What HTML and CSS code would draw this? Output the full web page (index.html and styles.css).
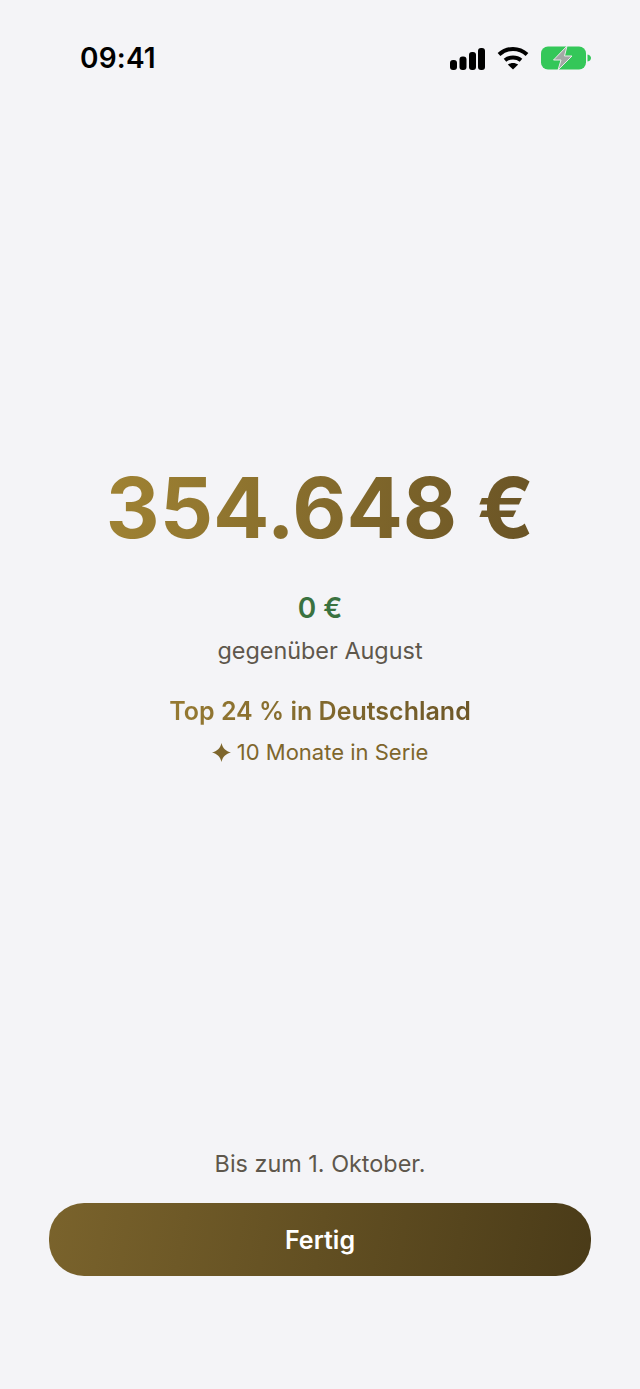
FILE: index.html
```
<!DOCTYPE html>
<html lang="de">
<head>
<meta charset="UTF-8">
<title>Kontostand</title>
<link rel="stylesheet" href="styles.css">
</head>
<body>

<!-- status bar -->
<header class="statusbar">
  <span class="clock">09:41</span>
  <div class="status-icons">
    <svg class="ico-signal" width="35" height="22" viewBox="0 0 35 22">
      <rect x="0" y="12" width="7" height="10" rx="3"/>
      <rect x="9.500" y="8.500" width="7" height="13.500" rx="3"/>
      <rect x="19" y="4" width="7" height="18" rx="3"/>
      <rect x="28" y="0" width="7" height="22" rx="3"/>
    </svg>
    <svg class="ico-wifi" width="32" height="24" viewBox="0 0 32 24">
      <path d="M2 8.500 C10 1 22 1 30 8.500" fill="none" stroke="#000" stroke-width="4"/>
      <path d="M8 14.200 C12.500 10.500 19.500 10.500 24 14.200" fill="none" stroke="#000" stroke-width="4"/>
      <path d="M16 23.500 L10.800 18.600 C13.800 16.400 18.200 16.400 21.200 18.600 Z"/>
    </svg>
    <svg class="ico-battery" width="50" height="24" viewBox="0 0 50 24">
      <rect x="0" y="0.500" width="45" height="23" rx="7" fill="#34c759"/>
      <path d="M46.500 8.500 C49 9 50 10.500 50 12 C50 13.500 49 15 46.500 15.500 Z" fill="#34c759"/>
      <path d="M26 0 L12.500 14 H20 L17 24 L31 10 H23.500 Z" fill="#a3a8a6" stroke="#e9ebea" stroke-width="1"/>
    </svg>
  </div>
</header>

<main class="summary">
  <h1 class="amount">354.648 €</h1>
  <p class="delta">0 €</p>
  <p class="muted">gegenüber August</p>
  <p class="rank">Top 24 % in Deutschland</p>
  <p class="streak"><svg class="spark" width="19" height="19" viewBox="0 0 18 18"><path d="M9 0 C10 4.800 13.200 8 18 9 C13.200 10 10 13.200 9 18 C8 13.200 4.800 10 0 9 C4.800 8 8 4.800 9 0 Z"/></svg> 10 Monate in Serie</p>
</main>

<footer class="bottom">
  <p class="muted">Bis zum 1. Oktober.</p>
  <button class="done">Fertig</button>
</footer>

</body>
</html>
```

FILE: styles.css
```
/* ===== global layout ===== */
html,body{margin:0;height:100%}
body{
  width:640px;height:1389px;display:flex;flex-direction:column;
  background:#f4f4f7;color:#5e574c;
  font-family:Inter,"Liberation Sans",sans-serif;
}
p,h1{margin:0}

/* ---------- status bar ---------- */
.statusbar{
  flex:none;height:22px;padding:47px 49px 0 80px;
  display:flex;align-items:center;justify-content:space-between;
}
.clock{font-size:28px;font-weight:600;color:#000;letter-spacing:.2px}
.status-icons{display:flex;align-items:center;gap:12px}
.ico-signal{margin-top:2px}

/* ---------- balance block ---------- */
.summary{flex:none;padding-top:389px;text-align:center}
.amount{
  font-size:83.500px;font-weight:700;line-height:100px;
  width:max-content;margin:0 auto;
  background:linear-gradient(100deg,#a08333,#695325);
  -webkit-background-clip:text;background-clip:text;color:transparent;
}
.delta{margin-top:33px;font-size:28px;line-height:34px;font-weight:600;color:#3a7240}
.muted{font-size:23.400px;line-height:30px}
.summary .muted{margin-top:11px}
.rank{
  margin-top:28px;font-size:25px;line-height:34px;font-weight:600;
  width:max-content;margin-left:auto;margin-right:auto;
  background:linear-gradient(90deg,#967a32,#6d5728);
  -webkit-background-clip:text;background-clip:text;color:transparent;
}
.streak{margin-top:9px;font-size:22px;line-height:30px;color:#7e662c}
.spark{fill:#7e662c;vertical-align:-2px}

/* ---------- bottom ---------- */
.bottom{margin-top:auto;padding:0 49px 113px;text-align:center}
.done{
  display:block;width:100%;height:73px;margin-top:24px;border:0;border-radius:35px;
  background:linear-gradient(100deg,#7a632c,#4a3b18);
  color:#fff;font:600 25px Inter,"Liberation Sans",sans-serif;
}
```
